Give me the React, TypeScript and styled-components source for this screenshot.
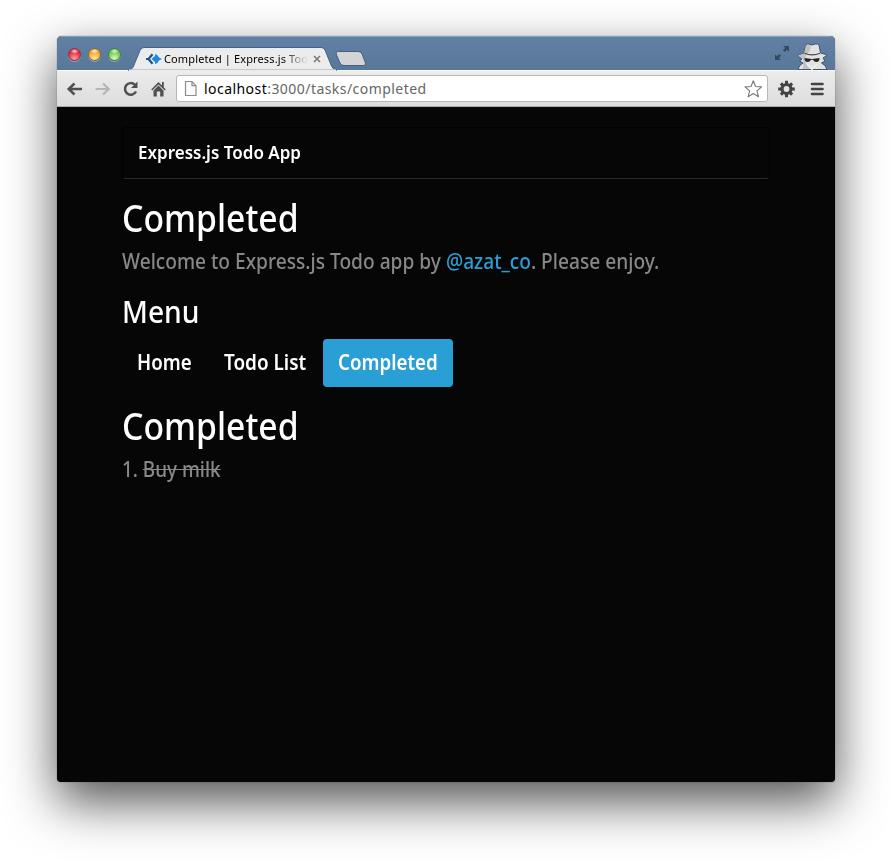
import React from "react";
import styled, { createGlobalStyle } from "styled-components";

const Global = createGlobalStyle`
  * { box-sizing: border-box; }
  body { margin: 0; background: #fff; font-family: "Noto Sans", sans-serif; }
  h1, h2, p, ol { margin: 0; padding: 0; font-weight: 400; }
`;

const Desktop = styled.div`
  height: 861px;
  padding: 36px 57px 0;
  overflow: hidden;
`;

const BrowserWindow = styled.div`
  display: flex;
  flex-direction: column;
  height: 746px;
  border-radius: 5px 5px 4px 4px;
  background: #060606;
  box-shadow: 0 0 1px rgba(0, 0, 0, 0.7), 0 20px 50px rgba(0, 0, 0, 0.68);
`;

const TitleBar = styled.header`
  display: flex;
  flex: none;
  height: 34px;
  padding-left: 11px;
  border-top: 1px solid #8aa0b9;
  border-radius: 5px 5px 0 0;
  background: linear-gradient(#6180a3, #58789a);
`;

const Lights = styled.div`
  display: flex;
  gap: 6px;
  width: 63px;
  padding-top: 11px;
`;

const Light = styled.span<{ $edge: string; $mid: string; $glow: string }>`
  width: 13px;
  height: 13px;
  margin-right: 1px;
  border: 1px solid ${(p) => p.$edge};
  border-radius: 50%;
  background:
    radial-gradient(ellipse 4px 2.5px at 50% 20%, rgba(255, 255, 255, 0.85), transparent),
    radial-gradient(circle at 50% 85%, ${(p) => p.$glow}, ${(p) => p.$mid} 65%);
  box-shadow: 0 1px 0 rgba(255, 255, 255, 0.35);
`;

const TabShape = styled.div`
  position: relative;
  width: 204px;
  height: 34px;
  margin-top: -1px;
`;

const TabBack = styled.svg`
  position: absolute;
  inset: 0;
  overflow: visible;
`;

const TabContent = styled.div`
  position: relative;
  display: flex;
  align-items: center;
  height: 22px;
  margin: 12px 10px 0 15px;
`;

const TabTitle = styled.div`
  width: 148px;
  margin-left: 2px;
  white-space: nowrap;
  font-size: 11px;
  letter-spacing: 0.13px;
  line-height: 18px;
  background: linear-gradient(90deg, #000 118px, #0000 144px);
  background-clip: text;
  color: transparent;
`;

const TabClose = styled.svg`
  margin-left: 1px;
`;

const NewTab = styled.svg`
  margin: 12px 0 0 -1px;
`;

const TitleRight = styled.div`
  display: flex;
  margin-left: auto;
  padding-right: 6px;
`;

const Expand = styled.svg`
  margin: 8px 5px 0 0;
`;

const Incognito = styled.svg`
  margin-top: 4px;
`;

const Toolbar = styled.div`
  display: flex;
  flex: none;
  align-items: center;
  height: 37px;
  padding: 0 9px;
  border-top: 1px solid #f8f8f8;
  border-bottom: 1px solid #a9a9a9;
  background: linear-gradient(#ececec, #dcdcdc);
`;

const ToolIcons = styled.div`
  display: flex;
  gap: 10px;
  width: 110px;
`;

const Address = styled.div`
  display: flex;
  align-items: center;
  width: 592px;
  height: 27px;
  padding: 0 5px 0 7px;
  border: 1px solid #b7b7b7;
  border-radius: 3px;
  background: #fff;
`;

const Url = styled.div`
  flex: 1;
  margin-left: 6px;
  font-size: 14px;
  line-height: 20px;
  letter-spacing: 0.45px;
  color: #666;
`;

const Host = styled.span`
  color: #000;
`;

const ToolEnd = styled.div`
  display: flex;
  gap: 14px;
  margin-left: 10px;
`;

const Page = styled.main`
  flex: 1;
  padding: 20px 65px 0;
  color: #888;
`;

const NavBar = styled.div`
  height: 52px;
  margin: 0 0 17px;
  padding: 0 15px;
  border: 1px solid #010101;
  border-bottom-color: #282828;
  border-radius: 4px;
  color: #fff;
  font-size: 18px;
  font-weight: 600;
  line-height: 48px;
`;

const Squeeze = styled.span<{ $x: number }>`
  display: inline-block;
  white-space: nowrap;
  transform: scaleX(${(p) => p.$x});
  transform-origin: 0 50%;
`;

const Title = styled.h1`
  height: 42px;
  margin-bottom: 9px;
  color: #fff;
  font-size: 38px;
  font-weight: 500;
  line-height: 42px;
`;

const Lead = styled.p`
  height: 28px;
  margin-bottom: 17px;
  font-size: 21px;
  font-weight: 500;
  line-height: 28px;
`;

const Handle = styled.a`
  color: #2a9fd6;
`;

const MenuTitle = styled.h2`
  height: 40px;
  margin-bottom: 7px;
  color: #fff;
  font-size: 30px;
  font-weight: 500;
  line-height: 40px;
`;

const Pills = styled.nav`
  display: flex;
  gap: 2px;
  margin-bottom: 17px;
`;

const Pill = styled.a<{ $width: number; $active?: boolean }>`
  width: ${(p) => p.$width}px;
  height: 48px;
  padding-left: 15px;
  border-radius: 4px;
  background: ${(p) => (p.$active ? "#2a9fd6" : "transparent")};
  color: #fff;
  font-size: 21px;
  font-weight: 600;
  line-height: 46px;
`;

const Tasks = styled.ol`
  list-style: none;
  font-size: 21px;
  font-weight: 500;
  line-height: 28px;
`;

const Done = styled.s`
  text-decoration-thickness: 1px;
`;

export default function App() {
  return (
    <>
      <Global />
      <Desktop>
        <BrowserWindow>
          <TitleBar>
            <Lights>
              <Light $edge="#8d3444" $mid="#e32540" $glow="#ff9b9b" />
              <Light $edge="#8d6a36" $mid="#eda32e" $glow="#ffe79a" />
              <Light $edge="#45803f" $mid="#69c64f" $glow="#d4ffb0" />
            </Lights>
            <TabShape>
              <TabBack width="204" height="34" viewBox="0 0 204 34">
                <path
                  d="M-3 34C1 33.500 2 32 3 29L9 14.500Q10.200 11.500 13 11.500H190Q193 11.500 194 14L200.500 30Q201.800 33.500 206 34Z"
                  fill="#ececec"
                  stroke="#46627f"
                  strokeWidth="1"
                />
                <path d="M-2 34.200H205" stroke="#ececec" strokeWidth="1.500" />
              </TabBack>
              <TabContent>
                <svg width="16" height="12" viewBox="0 0 16 12">
                  <path d="M6.500 1.200 2.500 6 6.500 10.800" fill="none" stroke="#17558c" strokeWidth="2.200" />
                  <path d="M0 6h4" stroke="#17558c" strokeWidth="2" />
                  <path d="M9 1Q12 1.500 13 4.500L16 6 13 7.500Q12 10.500 9 11L9 9 5.500 6 9 3Z" fill="#1e88e5" />
                </svg>
                <TabTitle>Completed | Express.js Tod</TabTitle>
                <TabClose width="8" height="8" viewBox="0 0 8 8">
                  <path d="m1 1 6 6M7 1 1 7" stroke="#777" strokeWidth="1.500" />
                </TabClose>
              </TabContent>
            </TabShape>
            <NewTab width="34" height="19" viewBox="0 0 34 19">
              <path
                d="M4 2.500H24Q27 2.500 28 5L31.500 14Q32 16.500 29.500 16.500H10Q7 16.500 6 14L2.200 5Q1.500 2.500 4 2.500Z"
                fill="#d3d4d6"
                stroke="#46627f"
              />
            </NewTab>
            <TitleRight>
              <Expand width="16" height="16" viewBox="0 0 16 16">
                <path d="M9.200 1H15V6.800L13 4.800 10.700 7.100 8.900 5.300 11.200 3ZM1 9.200 3 11.200 5.300 8.900 7.100 10.700 4.800 13 6.800 15H1Z" fill="#35495f" />
              </Expand>
              <Incognito width="34" height="29" viewBox="0 0 34 29">
                <path
                  d="M3 28.500Q4 24 8 22L4.500 20 7 18 2.500 14.500Q6 13 9 12.500L11 4Q12 2.500 14 3L17 4 20 3Q23 2.500 24 4L25.500 12Q30 13 32 14.500L28 17 30 20 26.500 22Q31 24 32 28.500Z"
                  fill="#e2e2e2"
                  stroke="#40536a"
                  strokeWidth="1"
                />
                <path d="M11 4 9 12.500 3 14.500 8 18 8 28H15L10 21 11 14 15 10 16 4Z" fill="#c2c2c2" />
                <path d="M9.500 12.200Q17 15.500 25 12.200" fill="none" stroke="#444" strokeWidth="1.100" />
                <path d="M9.500 17 17 18 24.500 17Q24.500 21 21.500 21 19 21 18 18.700H16Q15 21 12.500 21 9.500 21 9.500 17Z" fill="#252525" />
                <path d="m12 23 5 5.500 5-5.500" fill="none" stroke="#f4f4f4" strokeWidth="1.200" />
              </Incognito>
            </TitleRight>
          </TitleBar>
          <Toolbar>
            <ToolIcons>
              <svg width="18" height="18" viewBox="0 0 18 18">
                <path d="M8.500 3.500 2.700 9l5.800 5.500M3 9h13" fill="none" stroke="#505050" strokeWidth="2.500" />
              </svg>
              <svg width="18" height="18" viewBox="0 0 18 18">
                <path d="M9 3.500 14.800 9l-5.800 5.500M14.500 9H1.500" fill="none" stroke="#b5b5b5" strokeWidth="2.200" />
              </svg>
              <svg width="18" height="18" viewBox="0 0 18 18">
                <path d="M12.800 4.700A5.800 5.800 0 1 0 14 11.500" fill="none" stroke="#505050" strokeWidth="2.500" />
                <path d="M15.500 1.500V8H9Z" fill="#505050" />
              </svg>
              <svg width="18" height="18" viewBox="0 0 18 18">
                <path d="M8.500 2 1.200 9.600 2.200 10.600 8.500 4.500 14.800 10.600 15.800 9.600 13.800 7.500V2H12V5.600Z" fill="#505050" />
                <path d="M3.500 10.500 8.500 5.500 13.500 10.500V16.500H10.200V11.500H6.800V16.500H3.500Z" fill="#505050" />
              </svg>
            </ToolIcons>
            <Address>
              <svg width="14" height="18" viewBox="0 0 14 18">
                <path d="M1.500 1.500H8L12 5.700V15.500H1.500ZM8 1.500V5.700H12" fill="#fafafa" stroke="#8c8c8c" strokeWidth="1.200" />
              </svg>
              <Url>
                <Host>localhost</Host>:3000/tasks/completed
              </Url>
              <svg width="18" height="18" viewBox="0 0 18 18">
                <path
                  d="m9.300 .8 2.300 5.700 6 .4-4.600 3.900 1.500 6-5.200-3.300-5.200 3.300 1.500-6L1 6.900l6-.4Z"
                  fill="#fff"
                  stroke="#777"
                  strokeWidth="1.100"
                  strokeLinejoin="round"
                />
              </svg>
            </Address>
            <ToolEnd>
              <svg width="18" height="18" viewBox="0 0 18 18">
                <path
                  d="M8.500 .7V17.300M.2 9H16.800M2.900 3.400 14.100 14.600M14.100 3.400 2.900 14.600"
                  stroke="#444"
                  strokeWidth="3"
                />
                <circle cx="8.500" cy="9" r="4.500" fill="#e4e4e4" stroke="#444" strokeWidth="3.200" />
              </svg>
              <svg width="14" height="18" viewBox="0 0 14 18">
                <path d="M2 4H12.500M2 9H12.500M2 14H12.500" stroke="#444" strokeWidth="2.600" strokeLinecap="round" />
              </svg>
            </ToolEnd>
          </Toolbar>
          <Page>
            <NavBar>
              <Squeeze $x={0.945}>Express.js Todo App</Squeeze>
            </NavBar>
            <Title>
              <Squeeze $x={0.888}>Completed</Squeeze>
            </Title>
            <Lead>
              <Squeeze $x={0.912}>
                Welcome to Express.js Todo app by <Handle>@azat_co</Handle>. Please enjoy.
              </Squeeze>
            </Lead>
            <MenuTitle>
              <Squeeze $x={0.94}>Menu</Squeeze>
            </MenuTitle>
            <Pills>
              <Pill $width={85}>
                <Squeeze $x={0.892}>Home</Squeeze>
              </Pill>
              <Pill $width={112}>
                <Squeeze $x={0.9}>Todo List</Squeeze>
              </Pill>
              <Pill $width={130} $active>
                <Squeeze $x={0.892}>Completed</Squeeze>
              </Pill>
            </Pills>
            <Title>
              <Squeeze $x={0.888}>Completed</Squeeze>
            </Title>
            <Tasks>
              <li>
                <Squeeze $x={0.9}>
                  1. <Done>Buy milk</Done>
                </Squeeze>
              </li>
            </Tasks>
          </Page>
        </BrowserWindow>
      </Desktop>
    </>
  );
}
